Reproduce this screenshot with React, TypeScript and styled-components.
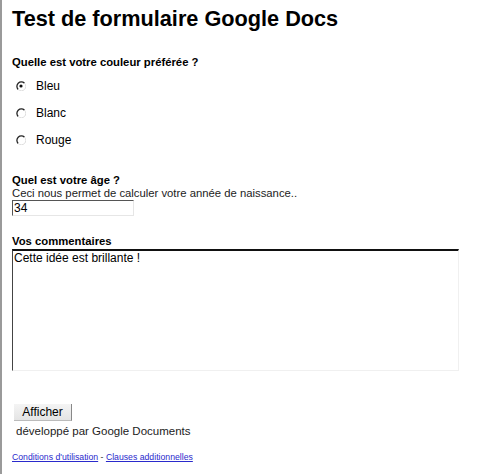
import React from "react";
import styled, { createGlobalStyle } from "styled-components";

const Global = createGlobalStyle`
  html, body { margin: 0; padding: 0; background: #fff; }
  body { font-family: "Liberation Sans", Arial, sans-serif; color: #000; }
`;

const Page = styled.div`
  width: 480px;
  height: 474px;
  box-sizing: border-box;
  border-left: 2px solid #9a9a9a;
  padding: 6px 0 0 10px;
  overflow: hidden;
`;

const Title = styled.h1`
  margin: 0;
  font-size: 21.7px;
  font-weight: bold;
  line-height: 26px;
`;

const Section = styled.div<{ $top: number }>`
  margin-top: ${(p) => p.$top}px;
  display: flex;
  flex-direction: column;
`;

const Label = styled.div`
  font-size: 11.3px;
  font-weight: bold;
  line-height: 13px;
`;

const Help = styled.div`
  font-size: 11.3px;
  line-height: 13px;
  color: #222;
`;

const RadioList = styled.div`
  display: flex;
  flex-direction: column;
  gap: 13px;
  margin-top: 10px;
  padding-left: 4px;
`;

const RadioRow = styled.label`
  display: flex;
  align-items: center;
  gap: 10px;
  font-size: 12px;
  line-height: 14px;
`;

const RadioIcon = ({ checked }: { checked?: boolean }) => (
  <svg width="10" height="10" viewBox="0 0 10 10">
    <path d="M8.5 2.2 A4.2 4.2 0 1 0 2.2 8.5" fill="none" stroke="#222" strokeWidth="1.3" />
    <path d="M2.2 8.5 A4.2 4.2 0 0 0 8.5 2.2" fill="none" stroke="#ddd" strokeWidth="1" />
    {checked && <circle cx="5" cy="5" r="1.6" fill="#111" />}
  </svg>
);

const TextInput = styled.div`
  box-sizing: border-box;
  width: 122px;
  height: 16px;
  border-top: 1px solid #555;
  border-left: 1px solid #555;
  border-right: 1px solid #e6e6e6;
  border-bottom: 1px solid #e6e6e6;
  font-size: 12px;
  line-height: 14px;
  padding-left: 1px;
`;

const TextArea = styled.div`
  box-sizing: border-box;
  width: 447px;
  height: 122px;
  border-top: 2px solid #111;
  border-left: 1px solid #444;
  border-right: 1px solid #f0f0f0;
  border-bottom: 1px solid #f0f0f0;
  font-size: 12px;
  line-height: 14px;
  padding: 0 1px;
  margin-top: 1px;
`;

const Button = styled.button`
  align-self: flex-start;
  box-sizing: border-box;
  margin-left: 2px;
  width: 58px;
  height: 17px;
  padding: 0;
  font-family: "Liberation Sans", Arial, sans-serif;
  font-size: 12px;
  color: #000;
  background: linear-gradient(#f4f4f4, #e4e4e4);
  border: none;
  border-right: 1px solid #888;
  border-bottom: 1px solid #bbb;
  border-radius: 0;
`;

const Powered = styled.div`
  margin-top: 3px;
  padding-left: 4px;
  font-size: 11.5px;
  line-height: 14px;
  color: #222;
`;

const Footer = styled.div`
  margin-top: 14px;
  font-size: 8.7px;
  line-height: 11px;
  color: #333;
`;

const Link = styled.a`
  color: #2a2acc;
  text-decoration: underline;
`;

export default function App() {
  return (
    <>
      <Global />
      <Page>
        <Title>Test de formulaire Google Docs</Title>
        <Section $top={24}>
          <Label>Quelle est votre couleur préférée ?</Label>
          <RadioList>
            <RadioRow><RadioIcon checked />Bleu</RadioRow>
            <RadioRow><RadioIcon />Blanc</RadioRow>
            <RadioRow><RadioIcon />Rouge</RadioRow>
          </RadioList>
        </Section>
        <Section $top={27}>
          <Label>Quel est votre âge ?</Label>
          <Help>Ceci nous permet de calculer votre année de naissance..</Help>
          <TextInput>34</TextInput>
        </Section>
        <Section $top={19}>
          <Label>Vos commentaires</Label>
          <TextArea>Cette idée est brillante !</TextArea>
        </Section>
        <Section $top={33}>
          <Button>Afficher</Button>
          <Powered>développé par Google Documents</Powered>
          <Footer>
            <Link href="#">Conditions d'utilisation</Link> - <Link href="#">Clauses additionnelles</Link>
          </Footer>
        </Section>
      </Page>
    </>
  );
}
